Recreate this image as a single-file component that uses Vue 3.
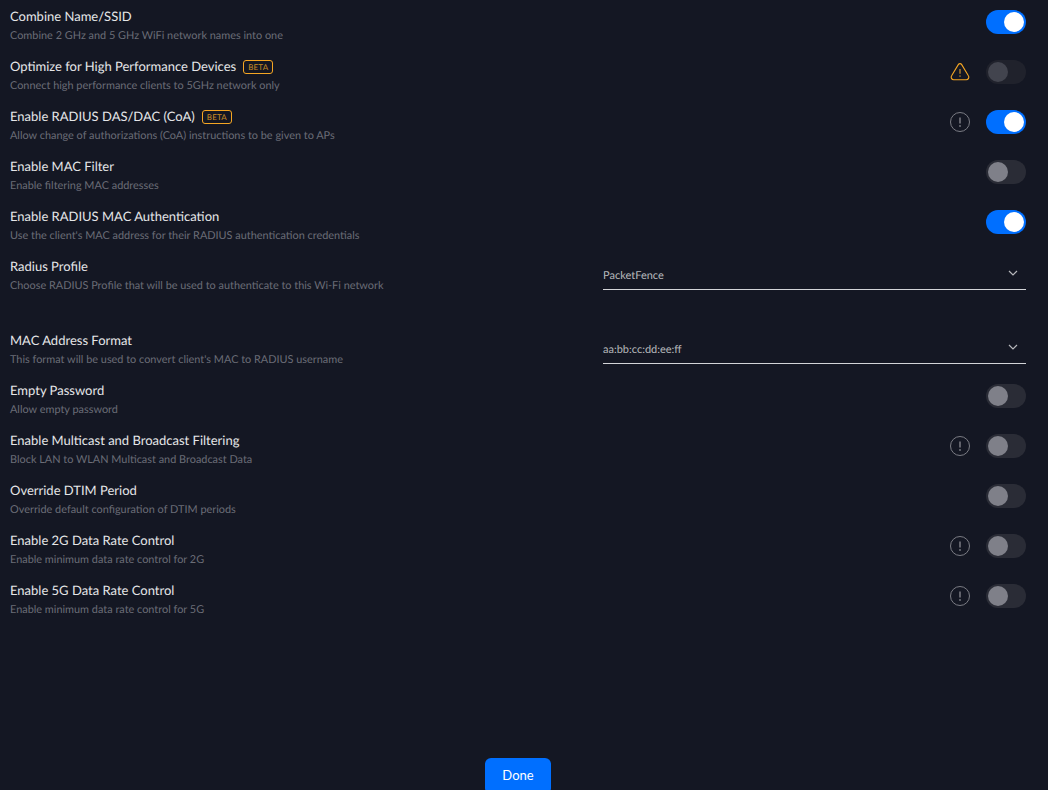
<script setup>
const rows = [
  { title: 'Combine Name/SSID', desc: 'Combine 2 GHz and 5 GHz WiFi network names into one', on: true },
  { title: 'Optimize for High Performance Devices', beta: true, desc: 'Connect high performance clients to 5GHz network only', icon: 'warn', disabled: true },
  { title: 'Enable RADIUS DAS/DAC (CoA)', beta: true, desc: 'Allow change of authorizations (CoA) instructions to be given to APs', icon: 'info', on: true },
  { title: 'Enable MAC Filter', desc: 'Enable filtering MAC addresses' },
  { title: 'Enable RADIUS MAC Authentication', desc: "Use the client's MAC address for their RADIUS authentication credentials", on: true },
  { title: 'Radius Profile', desc: 'Choose RADIUS Profile that will be used to authenticate to this Wi-Fi network', select: 'PacketFence', tall: true },
  { title: 'MAC Address Format', desc: "This format will be used to convert client's MAC to RADIUS username", select: 'aa:bb:cc:dd:ee:ff' },
  { title: 'Empty Password', desc: 'Allow empty password' },
  { title: 'Enable Multicast and Broadcast Filtering', desc: 'Block LAN to WLAN Multicast and Broadcast Data', icon: 'info' },
  { title: 'Override DTIM Period', desc: 'Override default configuration of DTIM periods' },
  { title: 'Enable 2G Data Rate Control', desc: 'Enable minimum data rate control for 2G', icon: 'info' },
  { title: 'Enable 5G Data Rate Control', desc: 'Enable minimum data rate control for 5G', icon: 'info' },
]
</script>

<template>
  <div class="page">
    <div class="list">
      <div v-for="r in rows" :key="r.title" class="row" :class="{ tall: r.tall }">
        <div class="text">
          <div class="title">
            <span>{{ r.title }}</span>
            <span v-if="r.beta" class="beta">BETA</span>
          </div>
          <div class="desc">{{ r.desc }}</div>
        </div>
        <div v-if="r.select" class="select">
          <span>{{ r.select }}</span>
          <svg width="12" height="12" viewBox="0 0 12 12" fill="none">
            <path d="M2 4l4 4 4-4" stroke="#b6b7bb" stroke-width="1.2" />
          </svg>
        </div>
        <div v-else class="controls">
          <svg v-if="r.icon === 'warn'" class="icon" width="20" height="20" viewBox="0 0 20 20" fill="none">
            <path d="M8.3 2.6 1.6 13.8a2.5 2.5 0 0 0 2.1 3.9h12.6a2.5 2.5 0 0 0 2.1-3.9L11.7 2.6a2 2 0 0 0-3.4 0Z" stroke="#f5a623" stroke-width="1.1" />
            <path d="M10 7v4.8" stroke="#a87a2c" stroke-width="1.5" />
            <circle cx="10" cy="14" r=".85" fill="#a87a2c" />
          </svg>
          <svg v-if="r.icon === 'info'" class="icon" width="20" height="20" viewBox="0 0 20 20" fill="none">
            <circle cx="10" cy="10" r="9.5" stroke="#7b7c84" />
            <path d="M10 5.5v6" stroke="#7b7c84" stroke-width="1.5" />
            <circle cx="10" cy="14" r=".9" fill="#7b7c84" />
          </svg>
          <div class="toggle" :class="{ on: r.on, disabled: r.disabled }"><i class="knob"></i></div>
        </div>
      </div>
    </div>
    <div class="footer"><button class="done">Done</button></div>
  </div>
</template>

<style>
html, body { margin: 0; background: #141723; overflow: hidden; }
</style>

<style scoped>
.page {
  width: 1036px;
  height: 790px;
  box-sizing: border-box;
  padding: 0 10px;
  display: flex;
  flex-direction: column;
  overflow: hidden;
  background: #141723;
  font-family: Lato, "Liberation Sans", sans-serif;
  text-rendering: geometricPrecision;
}
.list { flex: 1; }
.row {
  height: 50px;
  display: flex;
  justify-content: space-between;
  box-sizing: border-box;
  padding-top: 8px;
}
.row.tall { height: 74px; }
.title {
  font-size: 13px;
  line-height: 17px;
  color: #e5e6e8;
  display: flex;
  align-items: center;
  height: 17px;
}
.desc {
  margin-top: 4px;
  font-size: 10.9px;
  line-height: 14px;
  color: #6b6d77;
}
.beta {
  margin-left: 7px;
  box-sizing: border-box;
  height: 14px;
  padding: 0 4px;
  border: 1px solid #f5a623;
  border-radius: 3px;
  font-size: 8px;
  line-height: 12px;
  letter-spacing: .2px;
  color: #c98c23;
}
.controls {
  display: flex;
  align-items: center;
  gap: 16px;
  height: 24px;
  margin-top: 2px;
}
.icon { display: block; }
.toggle {
  width: 40px;
  height: 24px;
  border-radius: 12px;
  background: #2a2c36;
  position: relative;
}
.knob {
  position: absolute;
  top: 2px;
  left: 2px;
  width: 20px;
  height: 20px;
  border-radius: 50%;
  background: #7f8089;
}
.toggle.on { background: #006fff; }
.toggle.on .knob { left: 18px; background: #fff; }
.toggle.disabled { background: #20222c; }
.toggle.disabled .knob { background: #42444e; }
.select {
  width: 423px;
  height: 32px;
  box-sizing: border-box;
  border-bottom: 1px solid #d3d4d8;
  display: flex;
  align-items: center;
  justify-content: space-between;
  padding-right: 7px;
  padding-top: 3px;
  font-size: 11px;
  color: #b6b7bb;
}
.select svg { margin-top: -4px; }
.footer { display: flex; justify-content: center; height: 32px; flex: none; }
.done {
  width: 66px;
  height: 36px;
  padding: 0 0 3px;
  border: 0;
  border-radius: 6px;
  background: #006fff;
  color: #fff;
  font: 13px Lato, "Liberation Sans", sans-serif;
  flex: none;
}
</style>
